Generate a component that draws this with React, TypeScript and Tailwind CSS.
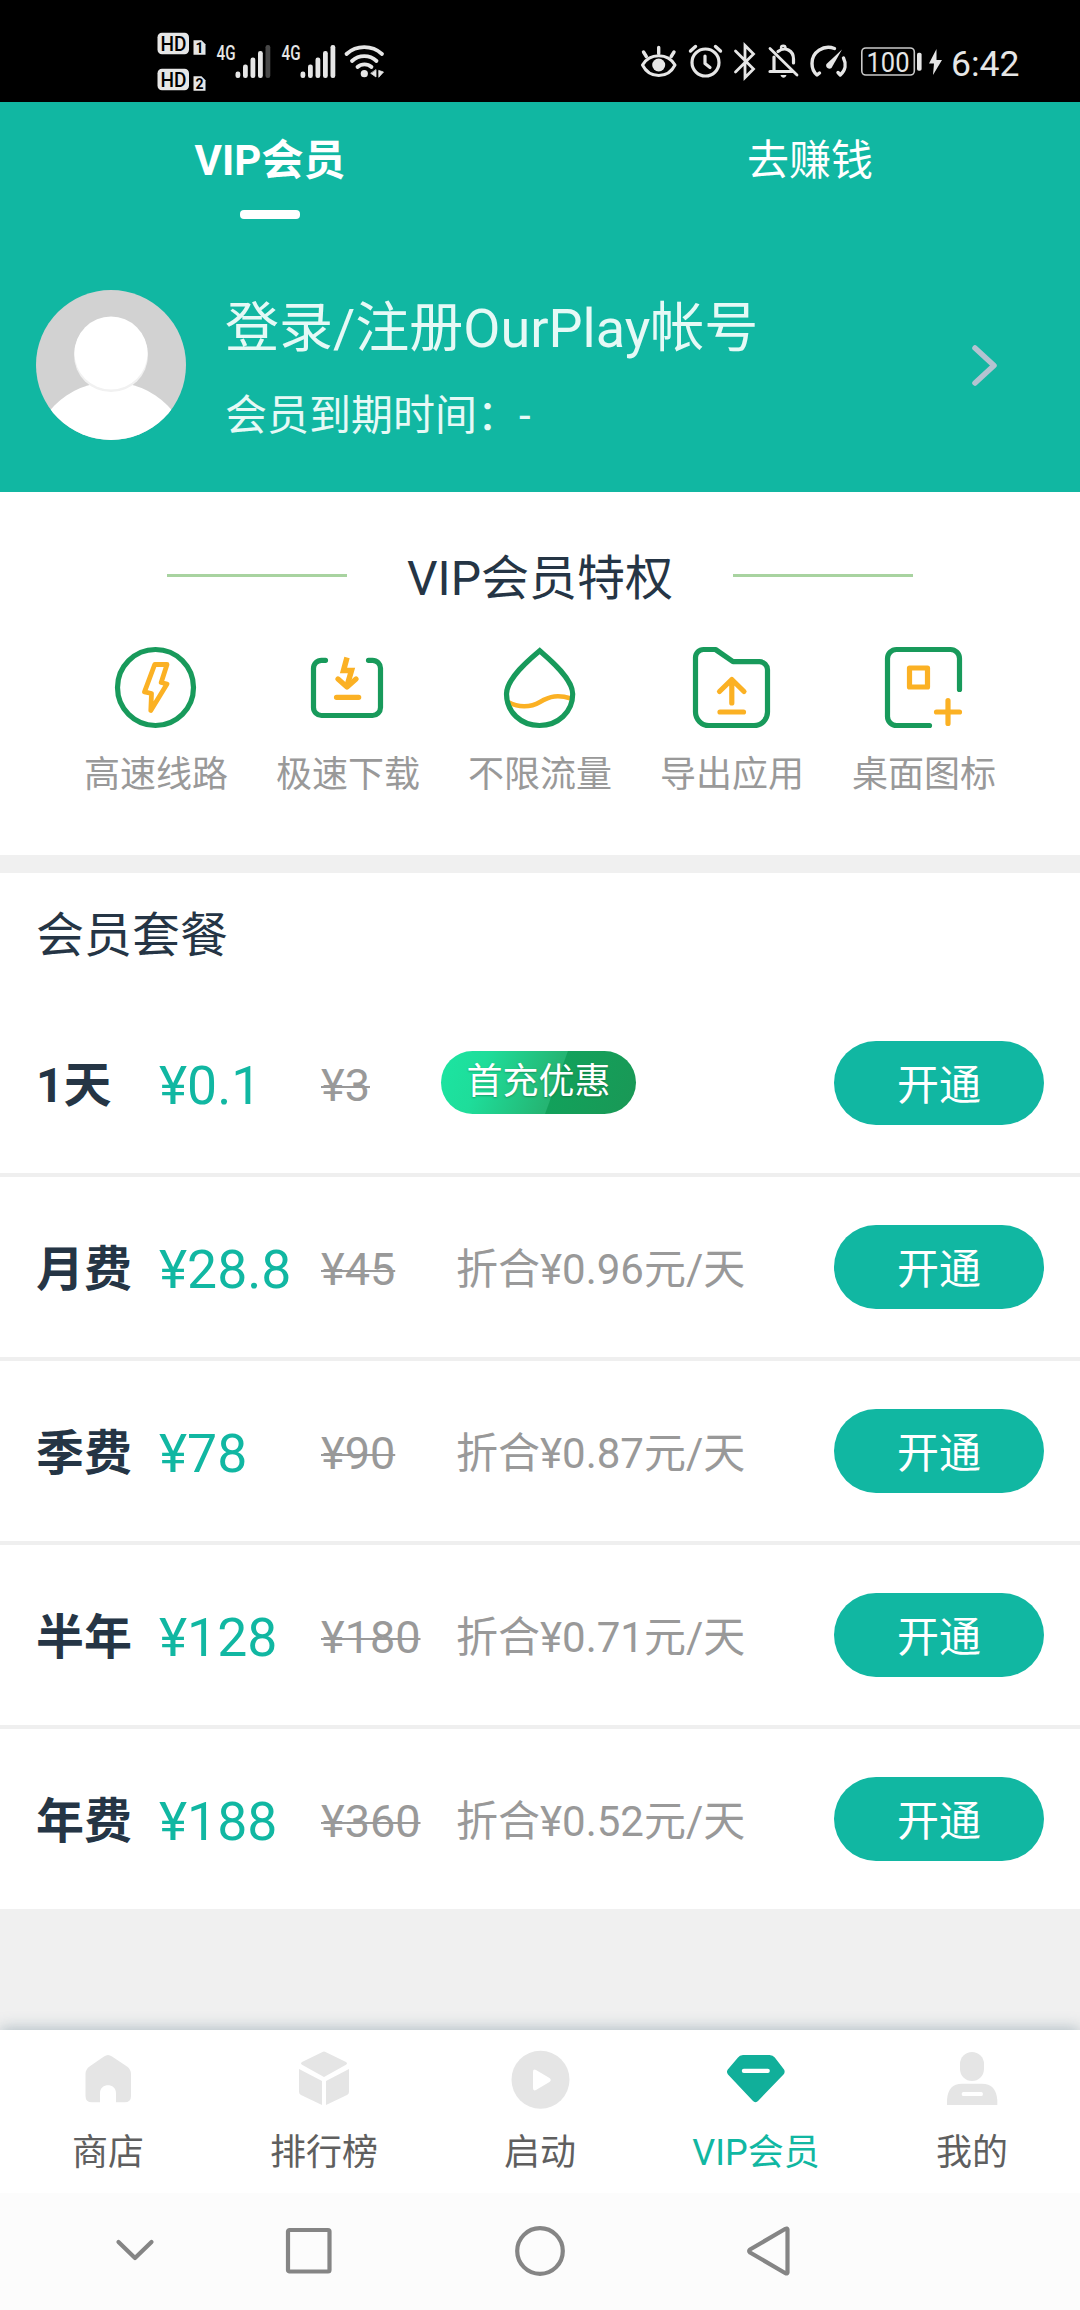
import type { ReactNode } from "react";
import { clsx } from "clsx";

const GREEN = "#189a5b";
const ORANGE = "#fbb124";

function StatusIcon({ x, w, children }: { x: number; w: number; children: ReactNode }) {
  return (
    <svg
      width={w}
      height={102}
      viewBox={`${x} 0 ${w} 102`}
      fill="none"
      stroke="#e6e6e6"
      strokeLinecap="round"
      strokeLinejoin="round"
      className="shrink-0"
    >
      {children}
    </svg>
  );
}

function HdBadge({ top, sim }: { top: number; sim: string }) {
  return (
    <g stroke="none">
      <rect x="157.5" y={top} width="31.5" height="21.5" rx="4.5" fill="#e6e6e6" />
      <text x="160.5" y={top + 18} fontSize="20.5" fontWeight="500" fill="#000" textLength="26" lengthAdjust="spacingAndGlyphs">
        HD
      </text>
      <path d={`M193.5 ${top + 22}v-14.5h8l4 4v10.5z`} fill="#e6e6e6" />
      <text x="195.5" y={top + 20.5} fontSize="14" fontWeight="700" fill="#000">
        {sim}
      </text>
    </g>
  );
}

function Signal({ full }: { full?: boolean }) {
  const tops = [71.5, 64.5, 57.5, 51, 45];
  return (
    <StatusIcon x={0} w={65}>
      <text x="6.5" y="60" fontSize="21" fontWeight="500" fill="#e6e6e6" stroke="none" textLength="19" lengthAdjust="spacingAndGlyphs">
        4G
      </text>
      {tops.map((top, i) => (
        <rect
          key={top}
          x={25.5 + i * 7.5}
          y={top}
          width="4.8"
          height={78 - top}
          rx="2.2"
          stroke="none"
          fill={i === 4 && !full ? "#484848" : "#e6e6e6"}
        />
      ))}
    </StatusIcon>
  );
}

function StatusBar() {
  return (
    <div className="flex h-[102px] items-center justify-between bg-black pl-[156px] pr-[54px]">
      <div className="flex">
        <StatusIcon x={156} w={54}>
          <HdBadge top={32.7} sim="1" />
          <HdBadge top={68.7} sim="2" />
        </StatusIcon>
        <Signal />
        <Signal full />
        <StatusIcon x={340} w={50}>
          <path d="M346.5 54a26.5 26.5 0 0 1 35.5 0M352 61a18 18 0 0 1 24.5 0M357.5 67a10.5 10.5 0 0 1 14 0" strokeWidth="3.8" />
          <circle cx="364.3" cy="73.7" r="3.6" fill="#e6e6e6" stroke="none" />
          <path d="M376 70v7l-5-3.5zM379 70.5l4.5 1.5l-4.5 5z" fill="#e6e6e6" strokeWidth="0.8" />
        </StatusIcon>
      </div>
      <div className="flex">
        <StatusIcon x={636} w={45}>
          <path d="M642.5 65c7-12.5 25.5-12.5 32.5 0c-7 14-25.5 14-32.5 0z" strokeWidth="3" />
          <circle cx="658.7" cy="65" r="6.5" fill="#e6e6e6" stroke="none" />
          <path d="M658.7 47.5v6M643.5 52l2.8 4.5M674 52l-2.8 4.5" strokeWidth="3.4" />
        </StatusIcon>
        <StatusIcon x={681} w={47}>
          <circle cx="705.5" cy="62.5" r="13.5" strokeWidth="3.2" />
          <path d="M690.5 51l5-4.5M720.5 51l-5-4.5" strokeWidth="3.4" />
          <path d="M705 56v7.5l5 4" strokeWidth="3.2" />
        </StatusIcon>
        <StatusIcon x={728} w={34}>
          <path d="M735.5 51l18 18l-8.500 8.500v-32l8.500 8.500l-18 18" strokeWidth="2.8" strokeLinejoin="miter" />
        </StatusIcon>
        <StatusIcon x={762} w={42}>
          <path d="M770 71.5h22.5M774 70.5v-13.5M778 51.5c7-5.5 15.5-1 15.5 7.5v4" strokeWidth="3.2" />
          <path d="M781 48c0-3 4.5-3 4.5 0" strokeWidth="2.4" />
          <path d="M770 48.5l27 26.5" strokeWidth="2.8" />
          <path d="M780.5 75h6c-1 3.5-5 3.5-6 0z" fill="#e6e6e6" stroke="none" />
        </StatusIcon>
        <StatusIcon x={804} w={50}>
          <path d="M834.5 48.5c-11-4-22.5 3.5-22.5 15c0 4.5 1.5 8.5 5 11.5l2.5-2M843.5 58c3 6 2 12.5-3.2 17l-2.3-2.5" strokeWidth="3.4" />
          <path d="M842 49.5l-10.5 18.5c-3 2-6.5-1-5-4z" fill="#e6e6e6" stroke="none" />
        </StatusIcon>
        <StatusIcon x={854} w={94}>
          <rect x="861.8" y="48" width="52.5" height="27" rx="4" strokeWidth="1.6" stroke="#c9c9c9" />
          <text x="866.5" y="71.5" fontSize="27" fill="#e6e6e6" stroke="none" textLength="43" lengthAdjust="spacingAndGlyphs">
            100
          </text>
          <rect x="917" y="52.7" width="4.6" height="18" rx="1.8" fill="#e6e6e6" stroke="none" />
          <path d="M936.5 49l-7.5 14.5h5l-1 11.5l9-15h-5.5z" fill="#e6e6e6" stroke="none" />
        </StatusIcon>
        <div className="-ml-0.5 w-20 pl-[5px] pt-[43px] text-[35.5px] leading-[42px] text-[#e6e6e6]">6:42</div>
      </div>
    </div>
  );
}

function Header() {
  return (
    <header className="h-[390px] bg-[#11b7a2] text-white">
      <div className="grid h-[117px] grid-cols-2 text-center text-[42px] leading-[60px]">
        <div className="flex flex-col items-center pt-[29px] font-bold">
          VIP会员
          <span className="mt-[19px] h-[9px] w-[60px] rounded bg-white" />
        </div>
        <div className="pt-[29px]">去赚钱</div>
      </div>
      <div className="flex items-center pl-9 pr-[72px] pt-[64px]">
        <svg width="150" height="150" viewBox="0 0 150 150">
          <defs>
            <clipPath id="avatar">
              <circle cx="75" cy="75" r="75" />
            </clipPath>
          </defs>
          <g clipPath="url(#avatar)">
            <rect width="150" height="150" fill="#d2d2d2" />
            <circle cx="75" cy="172" r="80" fill="#fff" />
            <circle cx="75" cy="65" r="37" fill="#f1f1f1" />
            <circle cx="75" cy="63" r="36.5" fill="#fff" />
          </g>
        </svg>
        <div className="ml-[39px] flex-1 pt-[7px] text-[#e6f9f6]">
          <p className="text-[54px] leading-[78px]">登录/注册OurPlay帐号</p>
          <p className="mt-[18px] text-[42px] leading-[60px]">会员到期时间：-</p>
        </div>
        <svg width="48" height="48" viewBox="0 0 48 48" fill="none" stroke="#b4c3d1" strokeWidth="5.5" strokeLinecap="round" strokeLinejoin="round">
          <path d="M15 7L34 24.5L15 42" />
        </svg>
      </div>
    </header>
  );
}

const privileges = [
  {
    label: "高速线路",
    icon: (
      <>
        <circle cx="41.5" cy="41.5" r="38" stroke={GREEN} />
        <path d="M40.7 18.5H53L47.2 36.5L53 38L36.8 64.5L37.5 47.5L30.5 45.8z" stroke={ORANGE} strokeWidth="4.8" />
      </>
    ),
  },
  {
    label: "极速下载",
    icon: (
      <>
        <path d="M19.5 14.3H15.5a8 8 0 0 0-8 8V61.5a8 8 0 0 0 8 8H66.5a8 8 0 0 0 8-8V22.3a8 8 0 0 0-8-8H62.5" stroke={GREEN} />
        <path d="M41 11.5L37.5 24.5H45.5L41 40" stroke={ORANGE} strokeWidth="5.5" strokeLinecap="butt" strokeLinejoin="miter" />
        <path d="M32 33L41 41L50 33M30.5 51.3H52.7" stroke={ORANGE} />
      </>
    ),
  },
  {
    label: "不限流量",
    icon: (
      <>
        <path d="M10 56C20 61.5 32 62 42 56S60 48.5 73 52.5" stroke={ORANGE} strokeWidth="4.6" />
        <path
          d="M41.7 4.7C33 12 8.5 32 8.5 48C8.5 66 23 79.5 41.5 79.5S74.7 66 74.7 48C74.7 32 50 12 41.7 4.7z"
          stroke={GREEN}
          strokeLinejoin="miter"
        />
      </>
    ),
  },
  {
    label: "导出应用",
    icon: (
      <>
        <path
          d="M13.5 3.5H25.5L43 15.7H69.5a8 8 0 0 1 8 8V66a13.5 13.5 0 0 1-13.5 13.5H19A13.5 13.5 0 0 1 5.5 66V11.5a8 8 0 0 1 8-8z"
          stroke={GREEN}
        />
        <path d="M41.8 57V33.5M29.5 45.5L41.8 33.5L54 45.5M30 66H53.5" stroke={ORANGE} />
      </>
    ),
  },
  {
    label: "桌面图标",
    icon: (
      <>
        <path d="M47.5 79.5H14.5a9 9 0 0 1-9-9V12.5a9 9 0 0 1 9-9H68.5a9 9 0 0 1 9 9V43.5" stroke={GREEN} />
        <rect x="27.5" y="22" width="18" height="19" stroke={ORANGE} />
        <path d="M66 54.5V77.5M54.5 66H77.5" stroke={ORANGE} />
      </>
    ),
  },
];

function Privileges() {
  return (
    <section className="h-[363px] bg-white">
      <div className="flex h-[120px] items-start justify-center">
        <span className="mt-[82px] h-[3px] w-[180px] bg-[#a8d3a0]" />
        <h2 className="w-[386px] pt-[52px] text-center text-[48px] leading-[70px] text-[#253545]">VIP会员特权</h2>
        <span className="mt-[82px] h-[3px] w-[180px] bg-[#a8d3a0]" />
      </div>
      <ul className="grid grid-cols-5 px-[60px] pt-[34px]">
        {privileges.map((p) => (
          <li key={p.label} className="flex flex-col items-center">
            <svg width="84" height="84" viewBox="0 0 84 84" fill="none" strokeWidth="5.2" strokeLinecap="round" strokeLinejoin="round">
              {p.icon}
            </svg>
            <span className="mt-[19px] text-[36px] leading-[52px] text-[#999]">{p.label}</span>
          </li>
        ))}
      </ul>
    </section>
  );
}

const plans = [
  { name: "1天", price: "¥0.1", old: "¥3", badge: "首充优惠" },
  { name: "月费", price: "¥28.8", old: "¥45", note: "折合¥0.96元/天" },
  { name: "季费", price: "¥78", old: "¥90", note: "折合¥0.87元/天" },
  { name: "半年", price: "¥128", old: "¥180", note: "折合¥0.71元/天" },
  { name: "年费", price: "¥188", old: "¥360", note: "折合¥0.52元/天" },
];

function Plans() {
  return (
    <section className="mt-[18px] bg-white">
      <h2 className="h-[120px] pl-9 pt-[28px] text-[48px] leading-[70px] text-[#253545]">会员套餐</h2>
      {plans.map((plan) => (
        <div
          key={plan.name}
          className="flex h-[184px] items-center border-b-4 border-[#efefef] pl-9 pr-9 last:h-[180px] last:border-b-0"
        >
          <span className="w-[123px] pt-1.5 text-[48px] font-bold text-[#253545]">{plan.name}</span>
          <span className="w-[162px] pt-[7px] text-[53.5px] text-[#11b7a2]">{plan.price}</span>
          <span className="w-[120px] pt-1.5 text-[45px] text-[#999] line-through decoration-2">{plan.old}</span>
          {plan.badge ? (
            <span className="mb-0.5 flex h-[63px] w-[195px] items-center justify-center rounded-full bg-[linear-gradient(110deg,#1ce5a2_0%,#1edd9a_22%,#25b472_58%,#12a15b_58.5%,#1a9856_100%)] text-[36px] text-white [text-shadow:0_1px_2px_rgba(0,60,30,0.35)]">
              {plan.badge}
            </span>
          ) : (
            <span className="pl-[15px] pt-1 text-[42px] text-[#999]">{plan.note}</span>
          )}
          <button className="ml-auto h-[84px] w-[210px] rounded-full bg-[#11b7a2] pt-[5px] text-[42px] text-white">开通</button>
        </div>
      ))}
    </section>
  );
}

const tabs = [
  {
    label: "商店",
    icon: (
      <path d="M26 6.5Q30 3.5 34 6.5L49 16.5Q53 19.5 53 24V46Q53 52.3 46.5 52.3H38V43C38 32.5 22 32.5 22 43V52.3H14Q7.5 52.3 7.5 46V24Q7.5 19.5 11.5 16.5z" />
    ),
  },
  {
    label: "排行榜",
    icon: (
      <>
        <path d="M28.5 2Q30 1.2 31.5 2L52 12Q54 13.4 52 14.8L30 27L8 14.8Q6 13.4 8 12z" />
        <path d="M5 19L28 31V55L7 45Q5 44 5 42z" />
        <path d="M55 19L32 31V55L53 45Q55 44 55 42z" />
      </>
    ),
  },
  {
    label: "启动",
    icon: (
      <>
        <circle cx="30.5" cy="29.7" r="29" />
        <path d="M23 22Q23 18.5 26 20L39.5 28Q42 30 39.5 32L26 40Q23 41.5 23 38z" fill="#fff" />
      </>
    ),
  },
  {
    label: "VIP会员",
    active: true,
    icon: (
      <>
        <path d="M12 7.5Q13.5 5 17 5H43.5Q47 5 48.8 7.5L58 19.5Q59.5 22 57.5 24.5L32.5 50.5Q29.5 54 26.5 50.5L2 24.5Q0 22 1.8 19.5z" />
        <rect x="15.8" y="18.7" width="28" height="4.3" rx="2" fill="#fff" />
      </>
    ),
  },
  {
    label: "我的",
    icon: (
      <>
        <rect x="18" y="2" width="24" height="29" rx="12" />
        <path d="M5 55V50Q6 33.7 20 33.7H40Q54 33.7 55.3 50V55z" />
        <rect x="19.8" y="42" width="21" height="4" rx="1.5" fill="#fff" />
      </>
    ),
  },
];

function TabBar() {
  return (
    <nav className="mt-[121px] grid h-[163px] grid-cols-5 bg-white pt-5 shadow-[0_-2px_14px_rgba(80,110,130,0.38)]">
      {tabs.map((tab) => (
        <div
          key={tab.label}
          className={clsx("flex flex-col items-center", tab.active ? "text-[#11b7a2]" : "text-[#5f5f5f]")}
        >
          <svg width="60" height="60" viewBox="0 0 60 60" fill={tab.active ? "#11af9a" : "#e5e5e5"}>
            {tab.icon}
          </svg>
          <span className="mt-[17px] text-[36px] leading-[52px]">{tab.label}</span>
        </div>
      ))}
    </nav>
  );
}

function SystemNav() {
  const props = {
    width: 54,
    height: 54,
    viewBox: "0 0 54 54",
    fill: "none",
    stroke: "#858585",
    strokeWidth: 4.2,
    strokeLinecap: "round" as const,
    strokeLinejoin: "round" as const,
  };
  return (
    <div className="relative flex h-[117px] items-center bg-[#fcfcfc] pb-px pl-[108px]">
      <svg {...props}>
        <path d="M10.5 18L27 34L43.5 18" />
      </svg>
      <svg {...props} className="ml-[120px]">
        <rect x="6" y="6" width="41.5" height="41.5" rx="1.5" />
      </svg>
      <svg {...props} className="ml-[177px]">
        <circle cx="27" cy="27" r="22.8" />
      </svg>
      <svg {...props} className="ml-[174px]">
        <path d="M46.5 5.5V48.5Q46 50 44.5 49.2L9 28.5Q7.5 27 9 25.5L44.5 4.8Q46 4 46.5 5.5z" />
      </svg>
    </div>
  );
}

export default function App() {
  return (
    <div className="h-[2310px] w-[1080px] overflow-hidden bg-[#f0f0f0] [font-family:Roboto,'Noto_Sans_CJK_SC',sans-serif]">
      <StatusBar />
      <Header />
      <Privileges />
      <Plans />
      <TabBar />
      <SystemNav />
    </div>
  );
}
